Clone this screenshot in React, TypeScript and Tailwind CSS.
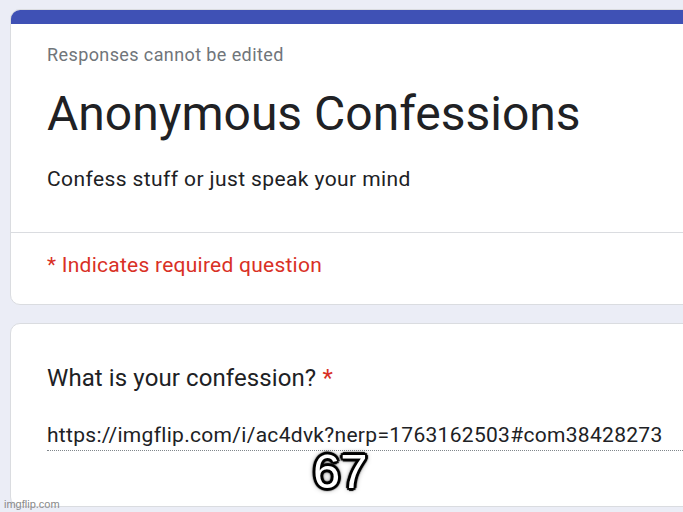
export default function App() {
  return (
    <div
      className="relative w-[683px] h-[512px] overflow-hidden bg-[#ebedf6] pt-[9px] pl-[10px]"
      style={{ fontFamily: 'Roboto, "Noto Sans", sans-serif' }}
    >
      <div className="w-[700px] bg-white rounded-[10px] border border-[#dadce0] overflow-hidden">
        <div className="h-[14px] bg-[#3f51b5]" />
        <div className="pl-[36px] pt-[19px]">
          <p className="text-[18px] leading-[24px] tracking-[0.4px] text-[#70757a]">Responses cannot be edited</p>
          <h1 className="mt-[19px] text-[48px] leading-[56px] text-[#202124]">Anonymous Confessions</h1>
          <p className="mt-[23px] text-[21px] leading-[28px] tracking-[0.4px] text-[#202124]">
            Confess stuff or just speak your mind
          </p>
        </div>
        <div className="mt-[39px] border-t border-[#dadce0] pl-[36px] pt-[18px] pb-[25px]">
          <p className="text-[21px] leading-[28px] tracking-[0.25px] text-[#d93025]">* Indicates required question</p>
        </div>
      </div>

      <div className="mt-[18px] w-[700px] h-[184px] bg-white rounded-[10px] border border-[#dadce0] pl-[36px] pt-[38px]">
        <p className="text-[24px] leading-[32px] tracking-[0.1px] text-[#202124]">
          What is your confession? <span className="text-[#d93025]">*</span>
        </p>
        <div className="mt-[28px] border-b border-dotted border-[#80868b] pb-[2px]">
          <p className="text-[21px] leading-[26px] tracking-[0.3px] text-[#202124]">
            https://imgflip.com/i/ac4dvk?nerp=1763162503#com38428273
          </p>
        </div>
      </div>

      <div
        className="absolute left-[313px] top-[443px] text-[49px] leading-[56px] text-white"
        style={{
          fontFamily: '"Liberation Sans", Arial, sans-serif',
          textShadow:
            '2px 2px 1px #000, -2px 2px 1px #000, 2px -2px 1px #000, -2px -2px 1px #000, 0 3px 1px #000, 0 -3px 1px #000, 3px 0 1px #000, -3px 0 1px #000, 0 0 6px #000',
        }}
      >
        67
      </div>

      <div
        className="absolute left-[4px] top-[497px] text-[11px] leading-[14px] text-[#8a8a8a]"
        style={{ fontFamily: '"Liberation Sans", Arial, sans-serif' }}
      >
        imgflip.com
      </div>
    </div>
  );
}
